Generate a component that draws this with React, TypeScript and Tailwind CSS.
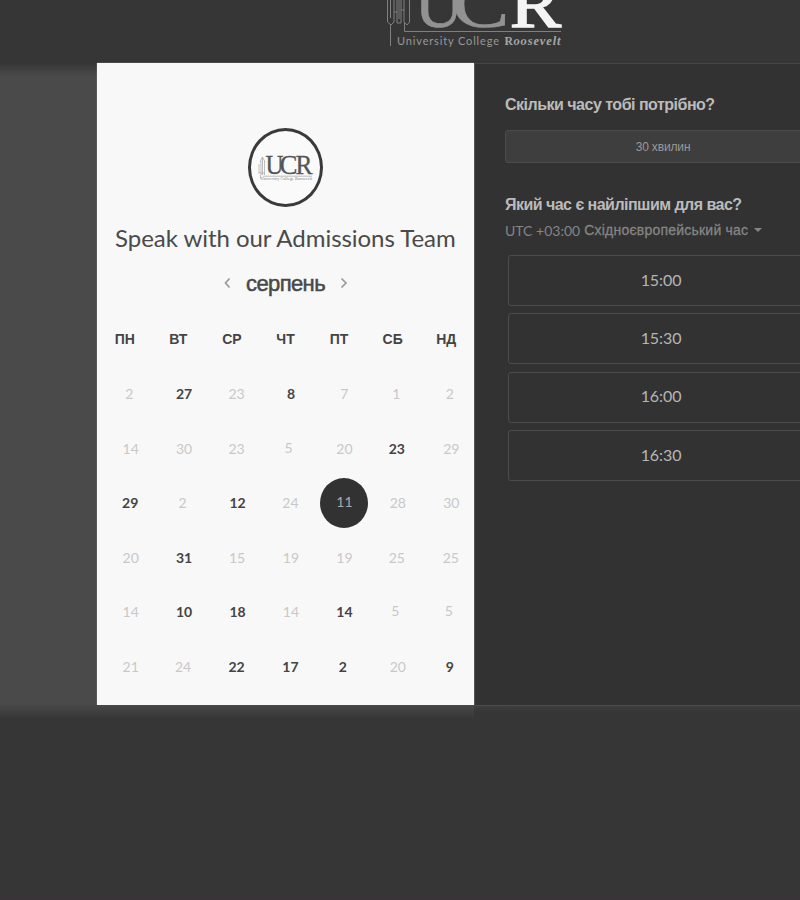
import React from "react";

type Day = { n: number; on?: boolean; picked?: boolean; shift?: string };

const off = (n: number, shift = ""): Day => ({ n, shift });
const on = (n: number, shift = ""): Day => ({ n, on: true, shift });

const WEEKDAYS = ["ПН", "ВТ", "СР", "ЧТ", "ПТ", "СБ", "НД"];

const DAYS: Day[] = [
  off(2, "pr-[3px]"), on(27), off(23, "pr-[2px]"), on(8), off(7), off(1, "pr-[3px]"), off(2, "pr-[3px]"),
  off(14), off(30), off(23, "pr-[2px]"), off(5, "pr-[5px] pb-[2px]"), off(20), on(23, "pr-[2px]"), off(29),
  on(29, "pr-[1px]"), off(2, "pr-[3px]"), on(12), off(24, "pr-[1px]"), { n: 11, picked: true }, off(28), off(30),
  off(20), on(31), off(15, "pr-[1px]"), off(19), off(19), off(25, "pr-[2px]"), off(25, "pr-[1px]"),
  off(14), on(10), on(18), off(14), on(14), off(5, "pr-[5px] pb-[2px]"), off(5, "pr-[5px] pb-[2px]"),
  off(21), off(24, "pr-[2px]"), on(22, "pr-[2px]"), on(17, "pr-[1px]"), on(2, "pr-[3px]"), off(20), on(9, "pr-[3px]"),
];

const TIMES = ["15:00", "15:30", "16:00", "16:30"];

function BigLogo() {
  return (
    <svg width="190" height="50" viewBox="380 0 190 50" className="ml-[380px] block">
      <g fill="none" stroke="#808080" strokeWidth="1">
        <path d="M387.500 0V22L391 25L394 22V0M390.500 0V18M397 0V23H401V0M399 0V19M404 0V22L407 25L409.500 22V0M394 12H397M401 10H404" />
        <path d="M390.500 25V46M404.500 23V31.500H561" />
      </g>
      <g fontFamily="'Liberation Serif', serif">
        <text x="414.500" y="26.500" fontSize="72" textLength="49" lengthAdjust="spacingAndGlyphs" fill="#929292" stroke="#929292" strokeWidth="0.700">U</text>
        <text x="451.500" y="26.500" fontSize="72" textLength="58" lengthAdjust="spacingAndGlyphs" fill="#929292" stroke="#929292" strokeWidth="0.700">C</text>
        <text x="510" y="26.500" fontSize="66" textLength="51" lengthAdjust="spacingAndGlyphs" fill="#f4f4f4" stroke="#f4f4f4" strokeWidth="1.600">R</text>
        <text x="504.500" y="44.500" fontSize="12.500" fontWeight="700" textLength="8.500" lengthAdjust="spacingAndGlyphs" fill="#a6a6a6">R</text>
        <text x="513.500" y="44.500" fontSize="12.500" fontWeight="700" fontStyle="italic" textLength="47" fill="#a6a6a6">oosevelt</text>
      </g>
      <text x="397" y="44.500" fontSize="11" textLength="102" fontFamily="Lato, sans-serif" fill="#989898">University College</text>
    </svg>
  );
}

function SmallLogo() {
  return (
    <svg width="58" height="30" viewBox="257 153 58 30">
      <g fill="none" stroke="#a5a5a5" strokeWidth="0.7">
        <path d="M259 164V173M261 161V175M262.500 157V175M264.500 161V175M258.500 173H265M260 162L262.500 157L265 162M260.500 175V179M263 176.200H312" />
      </g>
      <g fontFamily="'Liberation Serif', serif" fill="#555" stroke="#555" strokeWidth="0.300">
        <text x="265.500" y="173.800" fontSize="27" textLength="18" lengthAdjust="spacingAndGlyphs">U</text>
        <text x="279.500" y="173.800" fontSize="27" textLength="18" lengthAdjust="spacingAndGlyphs">C</text>
        <text x="295.500" y="173.800" fontSize="27" textLength="17" lengthAdjust="spacingAndGlyphs">R</text>
      </g>
      <text x="261" y="179.800" fontSize="4" textLength="51" fontFamily="'Liberation Serif', serif" fill="#777">University College Roosevelt</text>
    </svg>
  );
}

function Calendar() {
  return (
    <section className="flex h-[642px] w-[377px] shrink-0 flex-col bg-[#f8f8f8] shadow-[0_0_1px_#aaa]">
      <div className="mt-[65px] ml-[151px] flex h-[79px] w-[75px] shrink-0 items-center justify-center rounded-[50%] border-3 border-[#3a3a3a] bg-[#fafafa]">
        <SmallLogo />
      </div>
      <h1 className="mt-[15px] ml-[18px] h-[32px] font-[Lato,sans-serif] text-[24px] leading-[32px] tracking-[-0.04px] whitespace-nowrap text-[#4a4a4a]">
        Speak with our Admissions Team
      </h1>
      <div className="mt-[13px] flex h-[32px] items-center">
        <svg width="8" height="12" viewBox="0 0 8 12" className="ml-[126px] shrink-0" fill="none" stroke="#999" strokeWidth="1.700">
          <path d="M6.500 1.500L2.500 6L6.500 10.500" />
        </svg>
        <span className="ml-[15px] w-[80px] text-[22px] tracking-[-0.6px] text-[#484848] [-webkit-text-stroke:0.5px_#484848]">серпень</span>
        <svg width="8" height="12" viewBox="0 0 8 12" className="ml-[14px] shrink-0" fill="none" stroke="#999" strokeWidth="1.700">
          <path d="M1.500 1.500L6 6L1.500 10.500" />
        </svg>
      </div>
      <div className="mt-[28px] ml-[1px] grid h-[24px] w-[375px] grid-cols-7 items-center text-center text-[14px] font-bold text-[#444]">
        {WEEKDAYS.map((d) => <span key={d}>{d}</span>)}
      </div>
      <div className="mt-[16px] ml-[7px] grid h-[327px] w-[374px] grid-cols-7 grid-rows-6 font-[Lato,sans-serif] text-[14px] leading-none">
        {DAYS.map((d, i) => (
          <div key={i} className={`flex items-center justify-center ${d.shift ?? ""} ${d.on ? "font-bold text-[#444]" : "text-[#c8c8c8]"}`}>
            {d.picked ? (
              <span className="mb-[1px] flex h-[50px] w-[48px] shrink-0 items-center justify-center rounded-[50%] bg-[#323232] pb-[2px] text-[#aaa]">{d.n}</span>
            ) : d.n}
          </div>
        ))}
      </div>
    </section>
  );
}

function Options() {
  return (
    <section className="h-[642px] flex-1 overflow-hidden border-t border-l border-t-[#454545] border-l-[#555] bg-[#323232] pl-[30px]">
      <h2 className="mt-[31px] h-[20px] text-[16px] leading-[20px] font-bold tracking-[-0.5px] whitespace-nowrap text-[#bbb]">Скільки часу тобі потрібно?</h2>
      <div className="mt-[15px] flex h-[33px] w-[316px] items-center justify-center rounded-[3px] border border-[#4b4b4b] bg-[#3e3e3e] text-[12px] tracking-[-0.15px] text-[#999]">30 хвилин</div>
      <h2 className="mt-[32px] h-[20px] text-[16px] leading-[20px] font-bold tracking-[-0.53px] whitespace-nowrap text-[#bbb]">Який час є найліпшим для вас?</h2>
      <div className="mt-[5px] flex h-[20px] items-center whitespace-nowrap text-[#858585]">
        <span className="font-[Lato,sans-serif] text-[14px]">UTC +03:00</span>
        <span className="ml-[4px] text-[14px] tracking-[0.22px] [-webkit-text-stroke:0.3px_#858585]">Східноєвропейський час</span>
        <span className="ml-[6px] h-0 w-0 border-x-4 border-t-4 border-x-transparent border-t-[#858585]" />
      </div>
      <div className="mt-[15px] ml-[3px] flex w-[306px] flex-col gap-[7.400px]">
        {TIMES.map((t) => (
          <div key={t} className="flex h-[51px] items-center justify-center rounded-[3px] border border-[#4c4c4c] pb-[2px] font-[Lato,sans-serif] text-[16px] tracking-[-0.1px] text-[#b5b5b5]">{t}</div>
        ))}
      </div>
    </section>
  );
}

export default function App() {
  return (
    <main className="flex h-[900px] w-[800px] flex-col overflow-hidden border-b-2 border-[#3a3538] bg-[#363636] font-['Liberation_Sans',Arial,sans-serif]">
      <header className="h-[63px] shrink-0">
        <BigLogo />
      </header>
      <div className="flex h-[642px] shrink-0">
        <div className="w-[97px] shrink-0 bg-linear-to-b from-[#363636] via-[#4a4a4a] via-[2%] to-[#4a4a4a]" />
        <Calendar />
        <Options />
      </div>
      <div className="flex h-[14px] shrink-0">
        <div className="w-[474px] bg-linear-to-b from-[#484848] to-[#363636]" />
        <div className="flex-1 border-t border-[#4b4b4b] bg-linear-to-b from-[#3e3e3e] to-[#363636] to-[50%]" />
      </div>
    </main>
  );
}
